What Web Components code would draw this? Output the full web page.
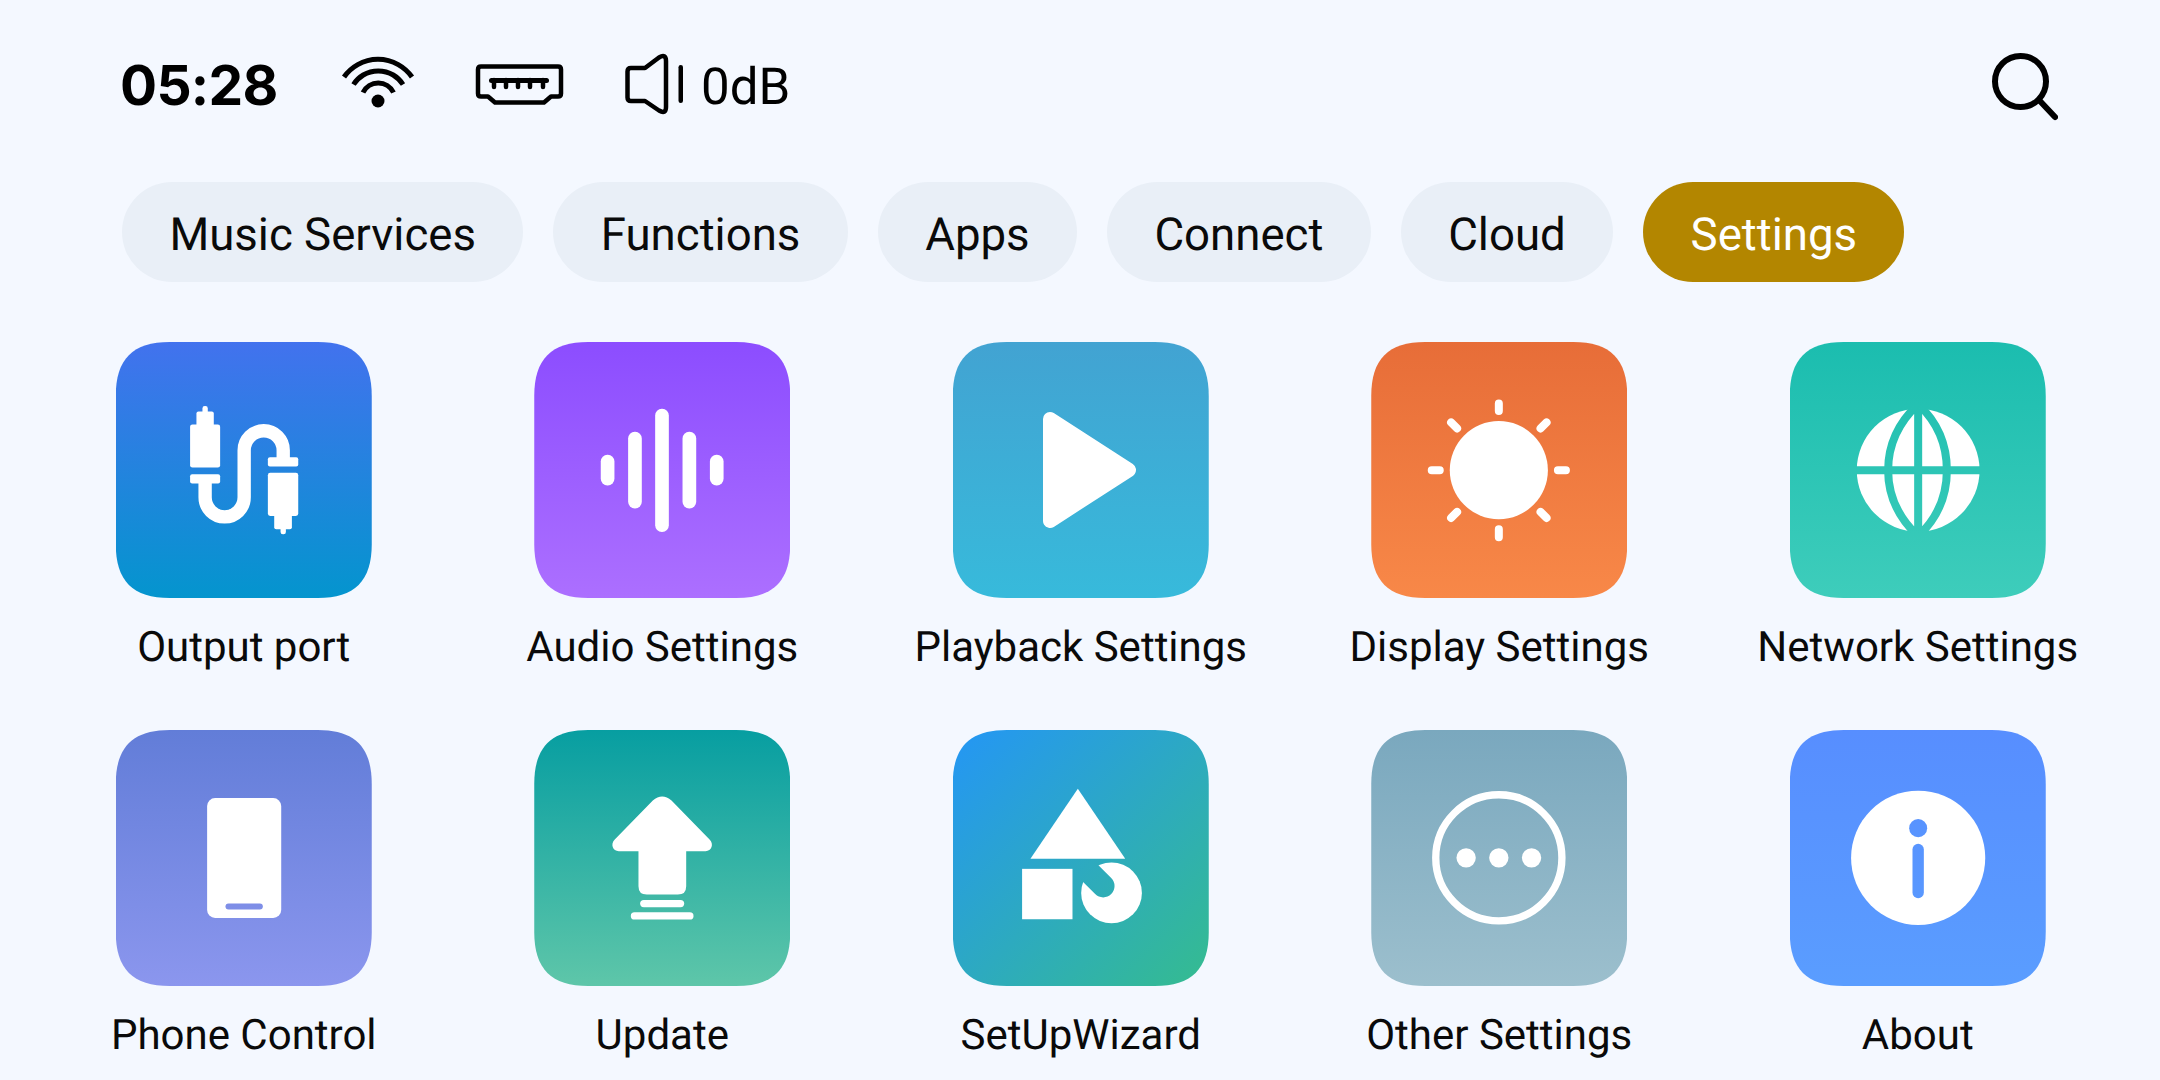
<!DOCTYPE html>
<html lang="en">
<head>
<meta charset="utf-8">
<title>Settings</title>
<style>
    body {
        margin: 0;
        background: #f4f8ff;
        font-family: Roboto, "Liberation Sans", sans-serif;
        text-rendering: geometricPrecision;
    }
</style>
</head>
<body>
<settings-screen>
    <status-bar slot="status" time="05:28" volume="0dB"></status-bar>

    <tab-bar slot="tabs">
        <tab-pill>Music Services</tab-pill>
        <tab-pill>Functions</tab-pill>
        <tab-pill>Apps</tab-pill>
        <tab-pill>Connect</tab-pill>
        <tab-pill>Cloud</tab-pill>
        <tab-pill active>Settings</tab-pill>
    </tab-bar>

    <app-tile style="--from:#4272ee;--to:#0495ce">
        <svg slot="icon" viewBox="48 36 767 767">
            <g fill="#fff">
                <rect x="307" y="228" width="16" height="30" rx="7"/>
                <rect x="289" y="244" width="52" height="50" rx="6"/>
                <rect x="270" y="283" width="90" height="129" rx="7"/>
                <rect x="270" y="432" width="90" height="28" rx="6"/>
                <rect x="503" y="381" width="91" height="28" rx="6"/>
                <rect x="503" y="428" width="91" height="129" rx="7"/>
                <rect x="522" y="545" width="53" height="52" rx="6"/>
                <rect x="541" y="585" width="16" height="27" rx="7"/>
            </g>
            <path d="M315 455V501.5A58.5 58.5 0 0 0 432 501.5V360.5A58.5 58.5 0 0 1 549 360.5V386" fill="none" stroke="#fff" stroke-width="40"/>
        </svg>
        Output port
    </app-tile>

    <app-tile style="--from:#8c4dff;--to:#ac6fff">
        <svg slot="icon" viewBox="42 36 767 767">
            <g fill="#fff">
                <rect x="242" y="374" width="41" height="92" rx="20"/>
                <rect x="324" y="305" width="41" height="230" rx="20"/>
                <rect x="405" y="236" width="41" height="369" rx="20"/>
                <rect x="487" y="305" width="41" height="230" rx="20"/>
                <rect x="569" y="374" width="41" height="92" rx="20"/>
            </g>
        </svg>
        Audio Settings
    </app-tile>

    <app-tile style="--from:#42a3d2;--to:#37badb">
        <svg slot="icon" viewBox="0 0 256 256">
            <path d="M97 77L176 128L97 179Z" fill="#fff" stroke="#fff" stroke-width="14" stroke-linejoin="round"/>
        </svg>
        Playback Settings
    </app-tile>

    <app-tile style="--from:#e76d38;--to:#f88848">
        <svg slot="icon" viewBox="64 36 767 767">
            <circle cx="447" cy="420" r="147" fill="#fff"/>
            <path d="M447 220V243M447 597V621M246 420H270M624 420H648M304 277L322 295M590 277L572 295M304 563L322 545M590 563L572 545" fill="none" stroke="#fff" stroke-width="24" stroke-linecap="round"/>
        </svg>
        Display Settings
    </app-tile>

    <app-tile style="--from:#1bbdaf;--to:#3ecdbb">
        <svg slot="icon" viewBox="60 36 767 767">
            <mask id="globe-cut" maskUnits="userSpaceOnUse" x="200" y="180" width="500" height="480">
                <rect x="200" y="180" width="500" height="480" fill="#fff"/>
                <path d="M200 420H700M444 180V660M444 222C382 280 354 350 354 420C354 490 382 560 444 618C506 560 530 490 530 420C530 350 506 280 444 222Z" fill="none" stroke="#000" stroke-width="24"/>
            </mask>
            <circle cx="444" cy="420" r="184" fill="#fff" mask="url(#globe-cut)"/>
        </svg>
        Network Settings
    </app-tile>

    <app-tile style="--from:#627dd8;--to:#8b96ee">
        <svg slot="icon" viewBox="48 30 767 767">
            <mask id="phone-cut" maskUnits="userSpaceOnUse" x="300" y="220" width="260" height="390">
                <rect x="300" y="220" width="260" height="390" fill="#fff"/>
                <rect x="376" y="550" width="112" height="18" rx="9" fill="#000"/>
            </mask>
            <rect x="321" y="234" width="222" height="359" rx="24" fill="#fff" mask="url(#phone-cut)"/>
        </svg>
        Phone Control
    </app-tile>

    <app-tile style="--from:#079ea1;--to:#5ec6a9">
        <svg slot="icon" viewBox="42 30 767 767">
            <g fill="#fff">
                <path d="M398 241Q426 218 454 241L568 358C582 372 574 393 556 393H498V498Q498 523 473 523H380Q355 523 355 498V393H296C278 393 270 372 284 358Z"/>
                <rect x="360" y="539" width="132" height="22" rx="11"/>
                <rect x="332" y="576" width="188" height="22" rx="11"/>
            </g>
        </svg>
        Update
    </app-tile>

    <app-tile style="--from:#2496f5;--to:#35bc8f;--angle:135deg">
        <svg slot="icon" viewBox="40 30 767 767">
            <mask id="wizard-cut" maskUnits="userSpaceOnUse" x="400" y="400" width="230" height="230">
                <rect x="400" y="400" width="230" height="230" fill="#fff"/>
                <path d="M420 427.5L490 497.5" fill="none" stroke="#000" stroke-width="68" stroke-linecap="round"/>
            </mask>
            <path d="M414 206L556 416H272Z" fill="#fff"/>
            <rect x="247" y="446" width="151" height="151" fill="#fff"/>
            <circle cx="515" cy="518" r="91" fill="#fff" mask="url(#wizard-cut)"/>
        </svg>
        SetUpWizard
    </app-tile>

    <app-tile style="--from:#7aa8be;--to:#9cbfcd">
        <svg slot="icon" viewBox="64 30 767 767">
            <circle cx="447" cy="413" r="189" fill="none" stroke="#fff" stroke-width="22"/>
            <g fill="#fff">
                <circle cx="349" cy="413" r="29"/>
                <circle cx="447" cy="413" r="29"/>
                <circle cx="545" cy="413" r="29"/>
            </g>
        </svg>
        Other Settings
    </app-tile>

    <app-tile style="--from:#578eff;--to:#5a9dff">
        <svg slot="icon" viewBox="60 30 767 767">
            <mask id="about-cut" maskUnits="userSpaceOnUse" x="230" y="200" width="430" height="430">
                <rect x="230" y="200" width="430" height="430" fill="#fff"/>
                <circle cx="444" cy="324" r="27" fill="#000"/>
                <rect x="427" y="371" width="34" height="163" rx="17" fill="#000"/>
            </mask>
            <circle cx="444" cy="413" r="201" fill="#fff" mask="url(#about-cut)"/>
        </svg>
        About
    </app-tile>
</settings-screen>

<script>
class SettingsScreen extends HTMLElement {
    constructor() {
        super()
        this.attachShadow({ mode: "open" })
        this.shadowRoot.innerHTML = `
            <style>
                :host {
                    display: block;
                    width: 2160px;
                    height: 1080px;
                    overflow: hidden;
                }

                .grid {
                    display: grid;
                    grid-template-columns: repeat(5, 418.5px);
                    row-gap: 52px;
                    padding-left: 34.5px;
                    margin-top: 60px;
                }
            </style>
            <slot name="status"></slot>
            <slot name="tabs"></slot>
            <div class="grid"><slot></slot></div>
        `
    }
}

class StatusBar extends HTMLElement {
    constructor() {
        super()
        this.attachShadow({ mode: "open" })
    }

    connectedCallback() {
        this.shadowRoot.innerHTML = `
            <style>
                :host {
                    display: flex;
                    align-items: center;
                    height: 182px;
                    padding: 0 102px 14px 120px;
                    box-sizing: border-box;
                    color: #000;
                }

                svg {
                    display: block;
                    flex: none;
                }

                .time {
                    font: 700 55px/60px Inter, Roboto, sans-serif;
                    letter-spacing: -0.7px;
                    width: 221px;
                    margin-top: 3px;
                }

                .wifi { margin-top: -4px; }
                .hdmi { margin-left: 58px; }
                .speaker { margin-left: 58px; }

                .volume {
                    font: 400 51px/60px Roboto, sans-serif;
                    margin-left: 17px;
                    margin-top: 8px;
                }

                .search {
                    margin-left: auto;
                    margin-top: 6px;
                }
            </style>
            <div class="time">${this.getAttribute("time")}</div>
            <svg class="wifi" width="75" height="56" viewBox="340 54 75 56">
                <g fill="none" stroke="#000" stroke-width="5">
                    <path d="M343 77A41.5 41.5 0 0 1 411 77"/>
                    <path d="M352.5 84.5A29.3 29.3 0 0 1 402 84.5"/>
                    <path d="M362 92.5A17 17 0 0 1 392.5 92.5"/>
                </g>
                <circle cx="377" cy="101" r="6.5" fill="#000"/>
            </svg>
            <svg class="hdmi" width="92" height="44" viewBox="474 63 92 44">
                <path d="M482 67.5H558Q561 67.5 561 70.5V94.5Q561 97.5 558 97.5H551L544 103.5H495L488 97.5H481Q478 97.5 478 94.5V70.5Q478 67.5 481 67.5Z" fill="none" stroke="#000" stroke-width="4.5" stroke-linejoin="round"/>
                <rect x="489" y="79" width="60" height="5" rx="2.5" fill="#000"/>
                <path d="M494 81V88M506 81V88M518 81V88M530 81V88M543 81V88" fill="none" stroke="#000" stroke-width="4.5" stroke-linecap="round"/>
            </svg>
            <svg class="speaker" width="60" height="62" viewBox="625 53 60 62">
                <path d="M632 68H646L660 57.5Q667 53.5 667 61V107Q667 114.5 660 110.5L646 101H632Q628.5 101 628.5 97.5V71.5Q628.5 68 632 68Z" fill="none" stroke="#000" stroke-width="4.5" stroke-linejoin="round"/>
                <rect x="679.5" y="65" width="4.5" height="38" rx="2.2" fill="#000"/>
            </svg>
            <div class="volume">${this.getAttribute("volume")}</div>
            <svg class="search" width="68" height="68" viewBox="1990 54 68 68">
                <circle cx="2020.5" cy="82.5" r="25.5" fill="none" stroke="#000" stroke-width="6"/>
                <path d="M2039 101L2055 118" fill="none" stroke="#000" stroke-width="6" stroke-linecap="round"/>
            </svg>
        `
    }
}

class TabBar extends HTMLElement {
    constructor() {
        super()
        this.attachShadow({ mode: "open" })
        this.shadowRoot.innerHTML = `
            <style>
                :host {
                    display: flex;
                    gap: 30px;
                    padding-left: 122px;
                }
            </style>
            <slot></slot>
        `
    }
}

class TabPill extends HTMLElement {
    constructor() {
        super()
        this.attachShadow({ mode: "open" })
        this.shadowRoot.innerHTML = `
            <style>
                :host {
                    display: flex;
                    align-items: center;
                    box-sizing: border-box;
                    height: 100px;
                    padding: 6px 47.4px 0;
                    border-radius: 50px;
                    background: #e9eff7;
                    color: #0a0a0a;
                    font-size: 45.6px;
                }

                :host([active]) {
                    background: #b38600;
                    color: #fff;
                }
            </style>
            <slot></slot>
        `
    }
}

class AppTile extends HTMLElement {
    constructor() {
        super()
        this.attachShadow({ mode: "open" })
        this.shadowRoot.innerHTML = `
            <style>
                :host {
                    display: flex;
                    flex-direction: column;
                    align-items: center;
                    color: #0a0a0a;
                    font-size: 42px;
                    line-height: 60px;
                    white-space: nowrap;
                }

                .tile {
                    width: 256px;
                    height: 256px;
                    margin-bottom: 20px;
                    background: linear-gradient(var(--angle, 180deg), var(--from), var(--to));
                    clip-path: path("M54 0H202C239 0 256 17 256 54V202C256 239 239 256 202 256H54C17 256 0 239 0 202V54C0 17 17 0 54 0Z");
                }

                ::slotted(svg) {
                    display: block;
                    width: 256px;
                    height: 256px;
                }
            </style>
            <div class="tile"><slot name="icon"></slot></div>
            <slot></slot>
        `
    }
}

customElements.define("settings-screen", SettingsScreen)
customElements.define("status-bar", StatusBar)
customElements.define("tab-bar", TabBar)
customElements.define("tab-pill", TabPill)
customElements.define("app-tile", AppTile)
</script>
</body>
</html>
